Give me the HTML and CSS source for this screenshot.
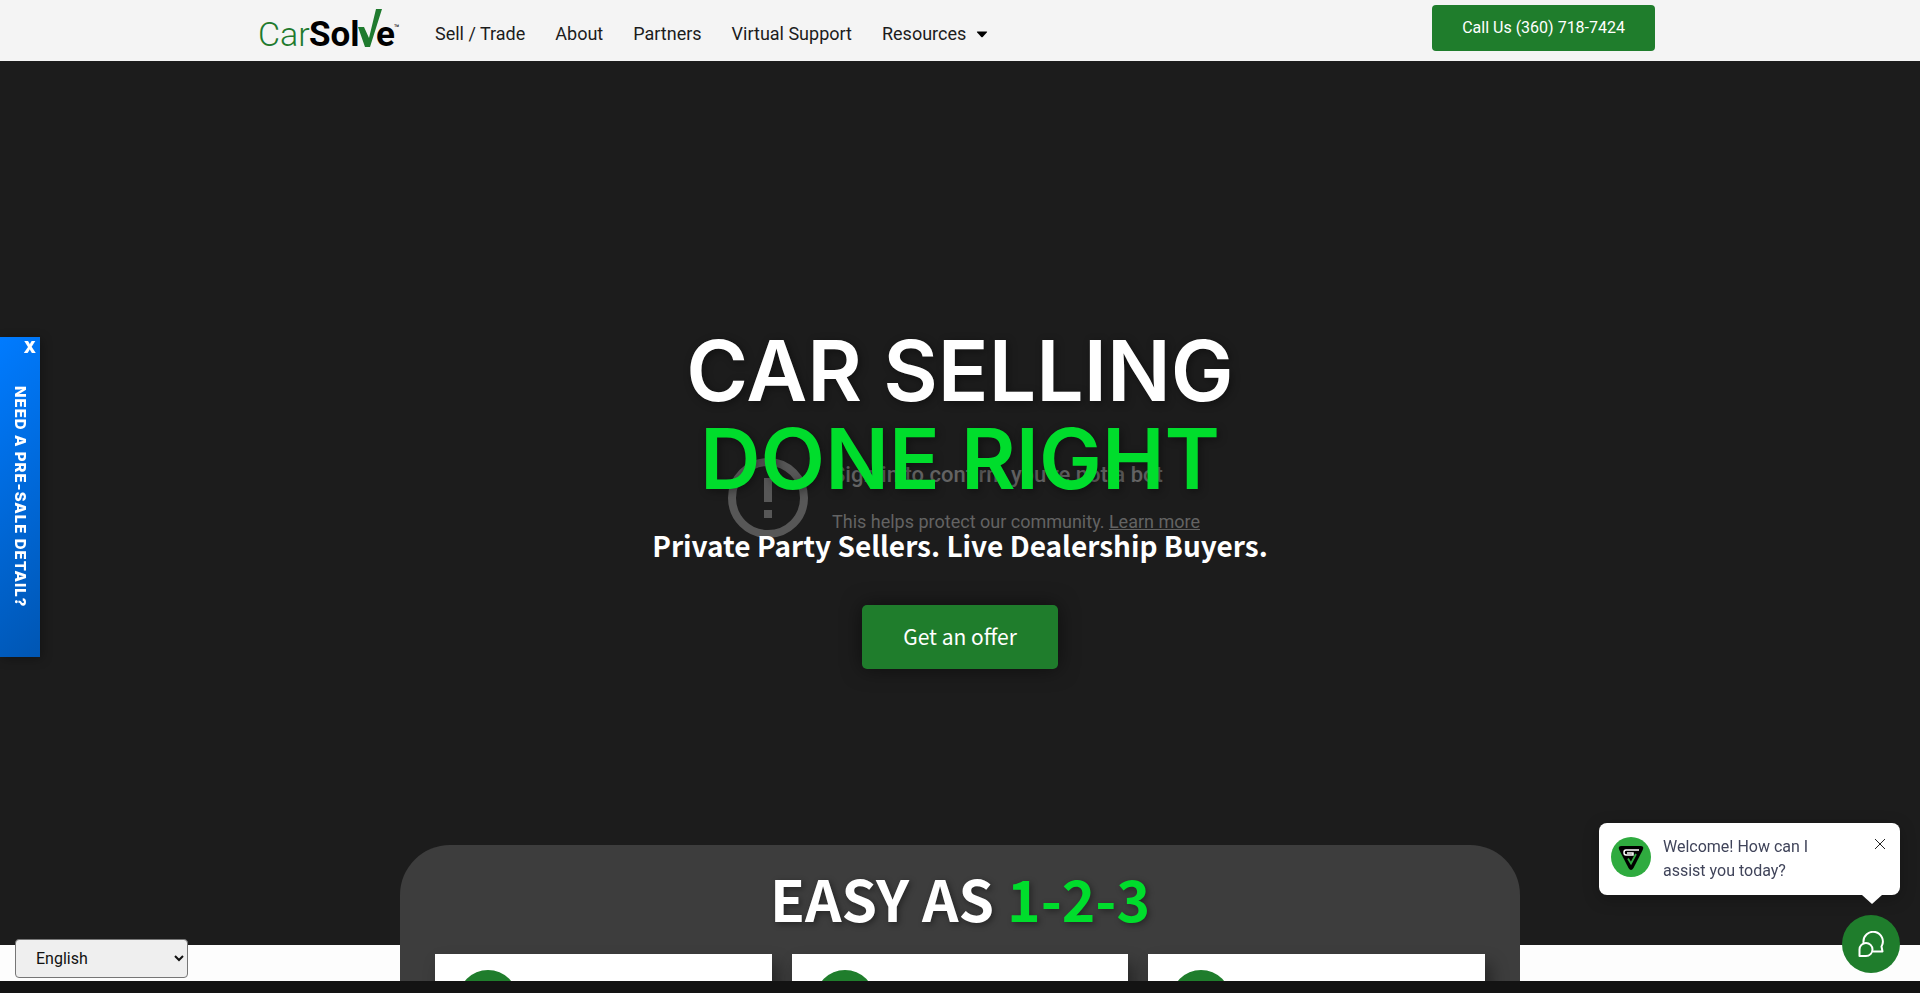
FILE: index.html
```html
<!DOCTYPE html>
<html lang="en">
<head>
<meta charset="utf-8">
<meta name="viewport" content="width=device-width, initial-scale=1">
<title>CarSolve</title>
<link rel="stylesheet" href="styles.css">
</head>
<body>
<header class="site-header">
  <div class="header-inner">
    <a class="logo" href="#" aria-label="CarSolve">
      <svg width="142" height="50" viewBox="0 0 142 50">
        <text class="logo-car" x="-2" y="38">Car</text>
        <text class="logo-solve" x="49" y="38">Sol</text>
        <path fill="#1f7a2e" d="M98 19h6l5 11L116 1h6L110 39h-5z"/>
        <text class="logo-solve" x="116" y="38">e</text>
        <text class="logo-tm" x="134" y="23">™</text>
      </svg>
    </a>
    <nav class="nav">
      <a href="#">Sell / Trade</a>
      <a href="#">About</a>
      <a href="#">Partners</a>
      <a href="#">Virtual Support</a>
      <a href="#">Resources <svg class="caret" width="12" height="7" viewBox="0 0 12 7"><path d="M1.500.5h9q1.200 0 .3 1L6.700 6q-.7.7-1.400 0L1.200 1.500q-.9-1 .3-1z"/></svg></a>
    </nav>
    <a class="call" href="#">Call Us (360) 718-7424</a>
  </div>
</header>
<main>
  <section class="hero">
    <div class="notice">
      <svg width="80" height="80" viewBox="0 0 80 80"><circle cx="40" cy="40" r="36" fill="none" stroke="#575757" stroke-width="8"/><path fill="#575757" d="M36 20h8v24h-8zM36 52h8v8h-8z"/></svg>
      <div>
        <p class="notice-title">Sign in to confirm you’re not a bot</p>
        <p class="notice-text">This helps protect our community. <a href="#">Learn more</a></p>
      </div>
    </div>
    <div class="pitch">
      <h1>CAR SELLING<br><span class="lime">DONE RIGHT</span></h1>
      <p class="tagline">Private Party Sellers. Live Dealership Buyers.</p>
      <a class="offer" href="#">Get an offer</a>
    </div>
  </section>
  <section class="steps">
    <h2>EASY AS <span class="lime">1-2-3</span></h2>
    <div class="cards">
      <article class="card"><span class="dot"></span></article>
      <article class="card"><span class="dot"></span></article>
      <article class="card"><span class="dot"></span></article>
    </div>
  </section>
</main>
<aside class="detail-tab">
  <button class="detail-close" type="button" aria-label="Close">X</button>
  <a class="detail-label" href="#">NEED A PRE-SALE DETAIL?</a>
</aside>
<div class="bottom-bar"></div>
<select class="language" aria-label="Language"><option>English</option></select>
<div class="chat">
  <div class="bubble">
    <svg class="avatar" width="40" height="40" viewBox="0 0 40 40"><circle cx="20" cy="20" r="20" fill="#2fab3f"/><path d="M10.500 9h19q4 0 2.200 4L22.500 31q-2.500 4-5 0L8.300 13q-1.800-4 2.200-4z"/><path fill="none" stroke="#fff" stroke-width="1.500" d="M28 13H15q-2 0-2 2.500T15 18h7v-2h-6"/><path fill="none" stroke="#2fab3f" stroke-width="1.800" d="M17 21.500l3 5 5-9.500"/></svg>
    <p>Welcome! How can I assist you today?</p>
    <button class="bubble-close" type="button" aria-label="Dismiss"><svg width="12" height="12" viewBox="0 0 12 12"><path fill="none" stroke="#222" d="M1 1l10 10M11 1L1 11"/></svg></button>
  </div>
  <button class="chat-open" type="button" aria-label="Open chat"><svg width="26" height="26" viewBox="0 0 26 26" fill="none" stroke="#fff" stroke-width="2" stroke-linejoin="round" stroke-linecap="round"><path d="M5.500 11.500A9.700 9.700 0 1 1 23.500 15.500L24.500 20.500L15.500 20.500"/><path d="M1.500 25V18.500A6.500 6.500 0 1 1 8 25z"/></svg></button>
</div>
</body>
</html>
```
FILE: styles.css
```css
* { box-sizing: border-box; }
body {
  margin: 0;
  height: 100vh;
  overflow: hidden;
  background: #fdfdfd;
  color: #1c1c1c;
  font-family: Roboto, sans-serif;
  font-size: 16px;
}
a { color: inherit; text-decoration: none; }
p, h1, h2 { margin: 0; }
button { border: 0; padding: 0; cursor: pointer; font: inherit; }
.lime { color: #00dd2c; }

.site-header { background: #f4f4f4; }
.header-inner {
  display: flex;
  align-items: flex-start;
  max-width: 1400px;
  height: 61px;
  margin: 0 auto;
  padding: 5px 5px 0 0;
}
.logo { margin: 3px 33px 0 0; }
.logo svg { display: block; overflow: visible; }
.logo-car { font-size: 34px; font-weight: 300; fill: #1f7a2e; }
.logo-solve { font-size: 35px; font-weight: 700; fill: #000; }
.logo-tm { font-size: 9px; fill: #000; }
.nav { display: flex; gap: 30px; padding-top: 16px; font-size: 18px; line-height: 26px; }
.caret { margin-left: 5px; vertical-align: 2px; }
.call {
  margin-left: auto;
  padding: 11px 30px;
  border-radius: 4px;
  background: #1f7d2c;
  color: #fff;
  line-height: 24px;
}

.hero {
  display: grid;
  place-items: center;
  min-height: 89vh;
  padding-bottom: 10px;
  background: #1c1c1c;
}
.notice, .pitch { grid-area: 1 / 1; }
.notice { display: flex; align-items: center; gap: 24px; padding-left: 8px; color: #636363; }
.notice-title { margin-bottom: 21px; font-size: 22px; font-weight: 500; line-height: 28px; }
.notice-text { font-size: 18px; line-height: 24px; }
.notice a { text-decoration: underline; }
.pitch { position: relative; text-align: center; }
h1 {
  color: #fff;
  font-family: Inter, sans-serif;
  font-size: 84px;
  font-weight: 600;
  line-height: 88px;
  text-shadow: 2px 2px 8px rgba(0, 0, 0, 0.4);
}
.tagline {
  margin: 22px 0 40px;
  color: #fff;
  font-family: "Noto Sans CJK SC", sans-serif;
  font-size: 28px;
  font-weight: 600;
  line-height: 40px;
}
.offer {
  display: inline-block;
  padding: 15px 41px 17px;
  border-radius: 5px;
  background: #1f7d2c;
  box-shadow: 0 0 20px rgba(0, 0, 0, 0.5);
  color: #fff;
  font-family: "Noto Sans CJK SC", sans-serif;
  font-size: 21px;
  line-height: 32px;
}

.steps {
  position: relative;
  width: 1120px;
  max-width: 100%;
  margin: -100px auto 0;
  padding: 16px 35px 35px;
  border-radius: 50px;
  background: #3d3d3d;
}
h2 {
  margin-bottom: 21px;
  color: #fff;
  font-family: "Noto Sans CJK SC", sans-serif;
  font-size: 57px;
  font-weight: 700;
  line-height: 72px;
  text-align: center;
  text-shadow: 2px 2px 6px rgba(0, 0, 0, 0.4);
}
.cards { display: grid; grid-template-columns: repeat(3, 1fr); gap: 20px; }
.card {
  min-height: 240px;
  padding: 16px 23px;
  background: #fff;
  box-shadow: 6px 10px 16px rgba(0, 0, 0, 0.4);
}
.dot { display: block; width: 60px; height: 60px; border-radius: 50%; background: #1f7d2c; }

.detail-tab {
  position: fixed;
  left: 0;
  top: 50%;
  display: flex;
  align-items: center;
  justify-content: center;
  width: 40px;
  height: 320px;
  margin-top: -160px;
  background: linear-gradient(135deg, #007bff, #0056b3);
  box-shadow: 2px 2px 10px rgba(0, 0, 0, 0.3);
  color: #fff;
  font-family: Inter, sans-serif;
  font-weight: 800;
}
.detail-close { position: absolute; top: 0; right: 4px; background: none; color: inherit; font-size: 16px; font-weight: 900; line-height: 20px; }
.detail-label { writing-mode: vertical-rl; font-size: 15px; line-height: 24px; letter-spacing: 1px; }

.bottom-bar { position: fixed; left: 0; right: 0; bottom: 0; height: 12px; background: #131313; }
.language {
  position: fixed;
  left: 15px;
  bottom: 15px;
  width: 173px;
  height: 39px;
  padding: 0 16px;
  border: 1px solid #767676;
  border-radius: 4px;
  background-color: #efefef;
  color: #111;
  font: 16px Roboto, sans-serif;
}
.chat {
  position: fixed;
  right: 20px;
  bottom: 20px;
  display: flex;
  flex-direction: column;
  align-items: flex-end;
  gap: 20px;
}
.bubble {
  position: relative;
  display: flex;
  align-items: flex-start;
  gap: 12px;
  width: 301px;
  padding: 12px 14px 12px 12px;
  border-radius: 8px;
  background: #fff;
  box-shadow: 0 4px 16px rgba(0, 0, 0, 0.25);
  color: #40445a;
  line-height: 24px;
}
.bubble::after {
  content: "";
  position: absolute;
  right: 18px;
  top: 100%;
  border: 10px solid transparent;
  border-top: 9px solid #fff;
  border-bottom: 0;
}
.avatar { flex: none; margin-top: 2px; }
.bubble p { flex: 1; padding-right: 40px; }
.bubble-close { display: flex; margin-top: 3px; background: none; }
.chat-open {
  display: grid;
  place-items: center;
  width: 58px;
  height: 58px;
  border-radius: 50%;
  background: #1f7d2c;
}
```
